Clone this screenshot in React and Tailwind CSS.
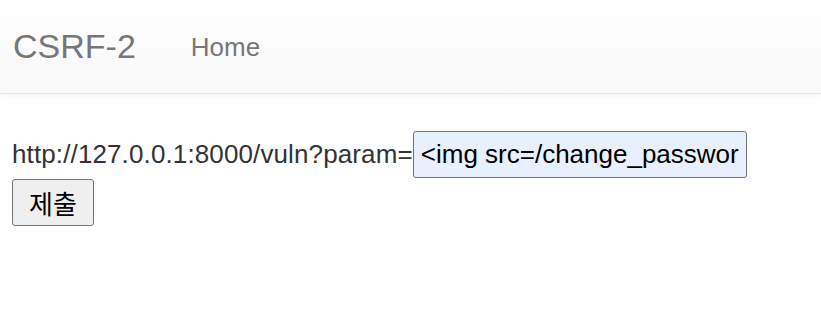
import React from "react";

const font = { fontFamily: '"Liberation Sans", Arial, "Noto Sans CJK KR", sans-serif' };

const App = () => {
  return (
    <div className="min-h-[334px] bg-white" style={font}>
      <nav className="h-[94px] border-b border-[#e7e7e7] bg-gradient-to-b from-white to-[#f8f8f8] shadow-[0_1px_6px_rgba(0,0,0,0.06)] flex items-center">
        <a className="ml-[13px] text-[34px] text-[#777] leading-none -mt-[1px]">CSRF-2</a>
        <a className="ml-[55px] text-[26px] text-[#777] leading-none">Home</a>
      </nav>
      <div className="px-[12px] pt-[37px]">
        <div className="flex items-center text-[26px] text-[#333]">
          <span className="tracking-[0.12px]">http://127.0.0.1:8000/vuln?param=</span>
          <input
            className="w-[334px] h-[47px] px-[7px] border border-[#767676] rounded-[3px] bg-[#e8f0fe] text-black text-[26px] outline-none"
            style={font}
            defaultValue="<img src=/change_password?pw=admin>"
          />
        </div>
        <button
          className="mt-[1px] w-[82px] h-[47px] border border-[#767676] rounded-[3px] bg-[#efefef] text-[26px] text-black"
          style={{ fontFamily: '"Noto Sans CJK KR", sans-serif' }}
        >
          제출
        </button>
      </div>
    </div>
  );
};

export default App;
